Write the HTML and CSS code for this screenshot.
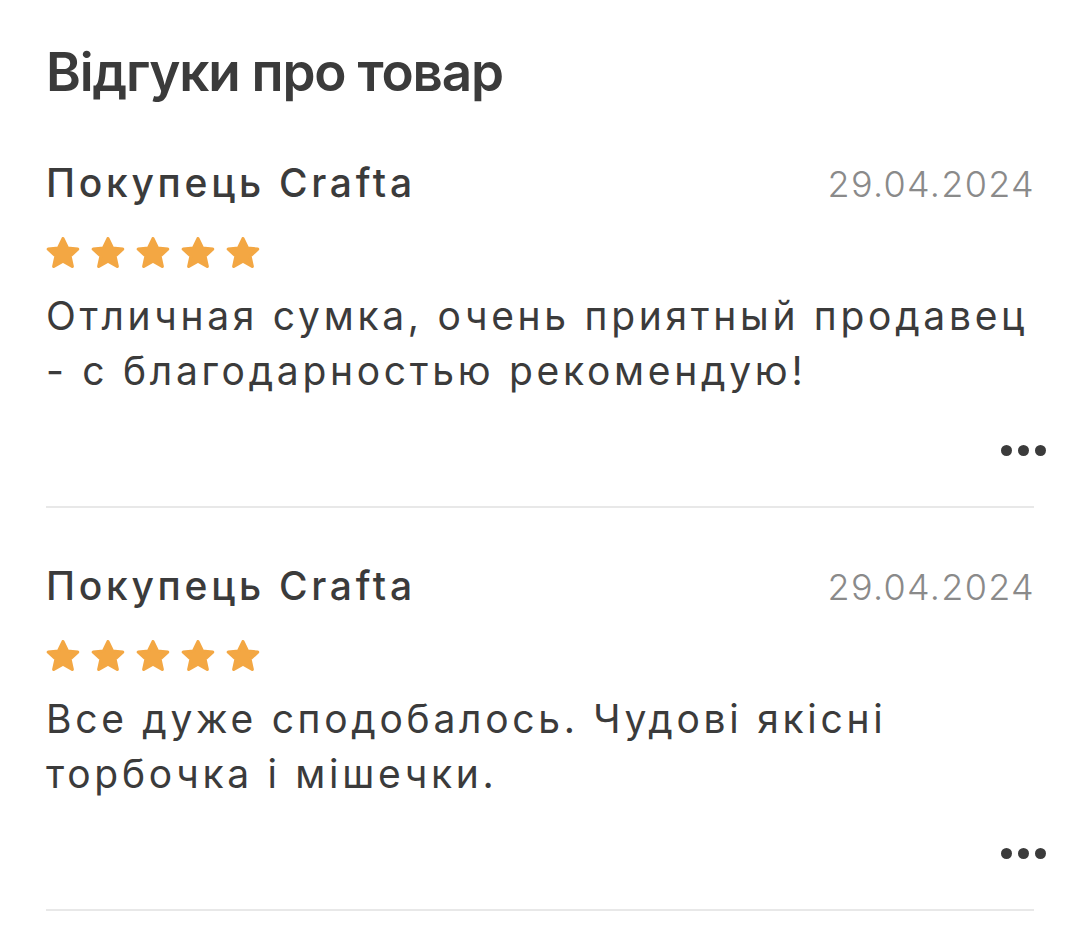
FILE: index.html
```html
<!DOCTYPE html>
<html lang="uk">
<head>
<meta charset="utf-8" />
<title>Відгуки про товар</title>
<link rel="stylesheet" href="styles.css">
</head>
<body>
	<div id="main">
		<h1 class="title">Відгуки про товар</h1>

		<div class="review">
			<div class="review_head">
				<span class="author">Покупець Crafta</span>
				<span class="date">29.04.2024</span>
			</div>
			<div class="stars">
				<svg class="star" viewBox="1.8 1.8 20.4 19.4"><polygon points="12,2.8 14.8,8.7 21.2,9.4 16.4,13.8 17.8,20.2 12,16.9 6.2,20.2 7.6,13.8 2.8,9.4 9.2,8.7" /></svg>
				<svg class="star" viewBox="1.8 1.8 20.4 19.4"><polygon points="12,2.8 14.8,8.7 21.2,9.4 16.4,13.8 17.8,20.2 12,16.9 6.2,20.2 7.6,13.8 2.8,9.4 9.2,8.7" /></svg>
				<svg class="star" viewBox="1.8 1.8 20.4 19.4"><polygon points="12,2.8 14.8,8.7 21.2,9.4 16.4,13.8 17.8,20.2 12,16.9 6.2,20.2 7.6,13.8 2.8,9.4 9.2,8.7" /></svg>
				<svg class="star" viewBox="1.8 1.8 20.4 19.4"><polygon points="12,2.8 14.8,8.7 21.2,9.4 16.4,13.8 17.8,20.2 12,16.9 6.2,20.2 7.6,13.8 2.8,9.4 9.2,8.7" /></svg>
				<svg class="star" viewBox="1.8 1.8 20.4 19.4"><polygon points="12,2.8 14.8,8.7 21.2,9.4 16.4,13.8 17.8,20.2 12,16.9 6.2,20.2 7.6,13.8 2.8,9.4 9.2,8.7" /></svg>
			</div>
			<p class="text">Отличная сумка, очень приятный продавец - с благодарностью рекомендую!</p>
			<div class="more"><span class="dot"></span><span class="dot"></span><span class="dot"></span></div>
		</div>

		<div class="review">
			<div class="review_head">
				<span class="author">Покупець Crafta</span>
				<span class="date">29.04.2024</span>
			</div>
			<div class="stars">
				<svg class="star" viewBox="1.8 1.8 20.4 19.4"><polygon points="12,2.8 14.8,8.7 21.2,9.4 16.4,13.8 17.8,20.2 12,16.9 6.2,20.2 7.6,13.8 2.8,9.4 9.2,8.7" /></svg>
				<svg class="star" viewBox="1.8 1.8 20.4 19.4"><polygon points="12,2.8 14.8,8.7 21.2,9.4 16.4,13.8 17.8,20.2 12,16.9 6.2,20.2 7.6,13.8 2.8,9.4 9.2,8.7" /></svg>
				<svg class="star" viewBox="1.8 1.8 20.4 19.4"><polygon points="12,2.8 14.8,8.7 21.2,9.4 16.4,13.8 17.8,20.2 12,16.9 6.2,20.2 7.6,13.8 2.8,9.4 9.2,8.7" /></svg>
				<svg class="star" viewBox="1.8 1.8 20.4 19.4"><polygon points="12,2.8 14.8,8.7 21.2,9.4 16.4,13.8 17.8,20.2 12,16.9 6.2,20.2 7.6,13.8 2.8,9.4 9.2,8.7" /></svg>
				<svg class="star" viewBox="1.8 1.8 20.4 19.4"><polygon points="12,2.8 14.8,8.7 21.2,9.4 16.4,13.8 17.8,20.2 12,16.9 6.2,20.2 7.6,13.8 2.8,9.4 9.2,8.7" /></svg>
			</div>
			<p class="text">Все дуже сподобалось. Чудові якісні торбочка і мішечки.</p>
			<div class="more"><span class="dot"></span><span class="dot"></span><span class="dot"></span></div>
		</div>
	</div>
</body>
</html>
```

FILE: styles.css
```css
* {
    margin: 0;
    padding: 0;
}

body {
    background-color: #FFF;
    color: #3B3B3B;
    font-family: Inter, "Noto Sans", sans-serif;
}

#main {
    padding: 41px 46px 0 46px;
}

.title {
    font-size: 53px;
    line-height: 62px;
    font-weight: 600;
    letter-spacing: -1.2px;
    margin-bottom: 2px;
}

.review {
    padding-top: 55px;
    border-bottom: 2px solid #E8E8E8;
}

.review_head {
    display: flex;
    justify-content: space-between;
    align-items: baseline;
    height: 46px;
}

.author {
    font-size: 39px;
    line-height: 46px;
    font-weight: 500;
    letter-spacing: 3.7px;
}

.date {
    font-size: 36px;
    line-height: 46px;
    font-weight: 300;
    letter-spacing: 1.3px;
    color: #8A8A8A;
    margin-right: -1px;
}

.stars {
    display: flex;
    gap: 11px;
    margin-top: 31px;
    height: 31px;
}

.star {
    width: 34px;
    height: 31px;
    fill: #F3A743;
    stroke: #F3A743;
    stroke-width: 2;
    stroke-linejoin: round;
}

.text {
    margin: 20px -12px 0 0;
    font-size: 39px;
    line-height: 55px;
    letter-spacing: 3.7px;
}

.more {
    display: flex;
    justify-content: flex-end;
    gap: 6px;
    margin: 47px -12px 50px 0;
}

.dot {
    width: 11px;
    height: 11px;
    border-radius: 50%;
    background-color: #3B3B3B;
}
```
